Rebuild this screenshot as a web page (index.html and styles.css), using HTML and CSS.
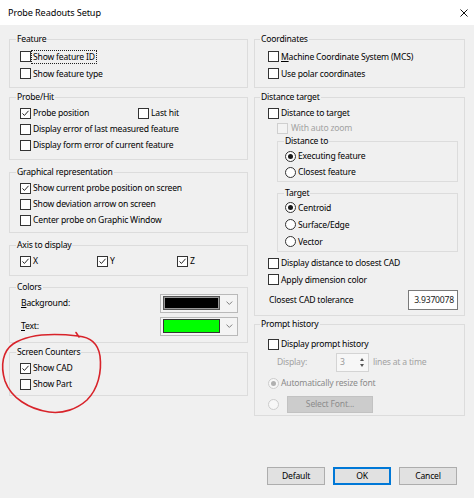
FILE: index.html
```html
<!DOCTYPE html>
<html>
<head>
<meta charset="utf-8">
<title>Probe Readouts Setup</title>
<link rel="stylesheet" href="styles.css">
</head>
<body>
<div class="window">
  <div class="titlebar">
    <span class="title">Probe Readouts Setup</span>
    <svg class="close" width="8" height="8" viewBox="0 0 8 8"><path d="M0.5 0.5L7.5 7.5M7.5 0.5L0.5 7.5" stroke="#111" stroke-width="1" fill="none"/></svg>
  </div>
  <div class="body">
    <div class="columns">
      <div class="col col-left">
        <fieldset class="grp g-feature">
          <legend>Feature</legend>
          <div class="row r17"><span class="cb"></span><span class="lbl focus">Show feature ID</span></div>
          <div class="row r17"><span class="cb"></span><span class="lbl">Show feature type</span></div>
        </fieldset>
        <fieldset class="grp g-probe">
          <legend>Probe/Hit</legend>
          <div class="row">
            <div class="item w118"><span class="cb"><svg viewBox="0 0 11 11"><path d="M1.8 5.4L4.2 7.9L9.2 2.2" class="tick"/></svg></span><span class="lbl">Probe position</span></div>
            <div class="item"><span class="cb"></span><span class="lbl">Last hit</span></div>
          </div>
          <div class="row"><span class="cb"></span><span class="lbl">Display error of last measured feature</span></div>
          <div class="row"><span class="cb"></span><span class="lbl">Display form error of current feature</span></div>
        </fieldset>
        <fieldset class="grp g-graph">
          <legend>Graphical representation</legend>
          <div class="row"><span class="cb"><svg viewBox="0 0 11 11"><path d="M1.8 5.4L4.2 7.9L9.2 2.2" class="tick"/></svg></span><span class="lbl">Show current probe position on screen</span></div>
          <div class="row"><span class="cb"></span><span class="lbl">Show deviation arrow on screen</span></div>
          <div class="row"><span class="cb"></span><span class="lbl">Center probe on Graphic Window</span></div>
        </fieldset>
        <fieldset class="grp g-axis">
          <legend>Axis to display</legend>
          <div class="row axis">
            <div class="item"><span class="cb"><svg viewBox="0 0 11 11"><path d="M1.8 5.4L4.2 7.9L9.2 2.2" class="tick"/></svg></span><span class="lbl">X</span></div>
            <div class="item"><span class="cb"><svg viewBox="0 0 11 11"><path d="M1.8 5.4L4.2 7.9L9.2 2.2" class="tick"/></svg></span><span class="lbl">Y</span></div>
            <div class="item"><span class="cb"><svg viewBox="0 0 11 11"><path d="M1.8 5.4L4.2 7.9L9.2 2.2" class="tick"/></svg></span><span class="lbl">Z</span></div>
          </div>
        </fieldset>
        <fieldset class="grp g-colors">
          <legend>Colors</legend>
          <div class="row crow">
            <span class="lbl grow"><u>B</u>ackground:</span>
            <div class="combo"><span class="swatch sw-black"></span><svg class="chev" width="7" height="4" viewBox="0 0 7 4"><path d="M0.5 0.5L3.5 3.5L6.5 0.5" stroke="#7a7a7a" fill="none"/></svg></div>
          </div>
          <div class="row crow crow2">
            <span class="lbl grow"><u>T</u>ext:</span>
            <div class="combo"><span class="swatch sw-green"></span><svg class="chev" width="7" height="4" viewBox="0 0 7 4"><path d="M0.5 0.5L3.5 3.5L6.5 0.5" stroke="#7a7a7a" fill="none"/></svg></div>
          </div>
        </fieldset>
        <fieldset class="grp g-screen">
          <legend>Screen Counters</legend>
          <div class="row"><span class="cb"><svg viewBox="0 0 11 11"><path d="M1.8 5.4L4.2 7.9L9.2 2.2" class="tick"/></svg></span><span class="lbl">Show CAD</span></div>
          <div class="row"><span class="cb"></span><span class="lbl">Show Part</span></div>
        </fieldset>
      </div>

      <div class="col col-right">
        <fieldset class="grp g-feature">
          <legend>Coordinates</legend>
          <div class="row r17"><span class="cb"></span><span class="lbl"><u>M</u>achine Coordinate System (MCS)</span></div>
          <div class="row r17"><span class="cb"></span><span class="lbl">Use polar coordinates</span></div>
        </fieldset>
        <fieldset class="grp g-dist">
          <legend>Distance target</legend>
          <div class="row"><span class="cb"></span><span class="lbl">Distance to target</span></div>
          <div class="row r14 indent"><span class="cb dis"></span><span class="lbl gray">With auto zoom</span></div>
          <fieldset class="grp sub g-distto">
            <legend>Distance to</legend>
            <div class="row"><span class="rb on"></span><span class="lbl">Executing feature</span></div>
            <div class="row"><span class="rb"></span><span class="lbl">Closest feature</span></div>
          </fieldset>
          <fieldset class="grp sub g-target">
            <legend>Target</legend>
            <div class="row r17"><span class="rb on"></span><span class="lbl">Centroid</span></div>
            <div class="row r17"><span class="rb"></span><span class="lbl">Surface/Edge</span></div>
            <div class="row r17"><span class="rb"></span><span class="lbl">Vector</span></div>
          </fieldset>
          <div class="row after-sub"><span class="cb"></span><span class="lbl">Display distance to closest CAD</span></div>
          <div class="row r17"><span class="cb"></span><span class="lbl">Apply dimension color</span></div>
          <div class="row tol-row">
            <span class="lbl grow">Closest CAD tolerance</span>
            <span class="tol">3.9370078</span>
          </div>
        </fieldset>
        <fieldset class="grp g-prompt">
          <legend>Prompt history</legend>
          <div class="row"><span class="cb"></span><span class="lbl">Display prompt history</span></div>
          <div class="row spin-row">
            <span class="lbl gray disp">Display:</span>
            <div class="spin"><span class="spin-val">3</span><span class="spin-btns"><span class="up"></span><span class="down"></span></span></div>
            <span class="lbl gray">lines at a time</span>
          </div>
          <div class="row auto-row"><span class="rb dis on"></span><span class="lbl gray2">Automatically resize font</span></div>
          <div class="row font-row"><span class="rb dis"></span><span class="fbtn">Select Font...</span></div>
        </fieldset>
      </div>
    </div>
    <div class="buttons">
      <span class="btn">Default</span>
      <span class="btn btn-ok">OK</span>
      <span class="btn">Cancel</span>
    </div>
  </div>
  <svg class="annot" width="474" height="498" viewBox="0 0 474 498">
    <path d="M76 332.5L79 337 M78 336 C90 337, 98 343, 100 356 C102 372, 98 389, 87 400 C77 409, 63 414, 49 412 C29 409, 11 398, 5 381 C0 365, 3 351, 13 344 C28 334, 52 333, 78 336" stroke="#d8232a" stroke-width="1.6" fill="none" stroke-linecap="round"/>
  </svg>
</div>
</body>
</html>
```

FILE: styles.css
```css
* { box-sizing: border-box; }
html, body { margin: 0; padding: 0; }
body {
  font-family: "Noto Sans", "Open Sans", sans-serif;
  font-size: 8.6px;
  letter-spacing: -0.2px;
  color: #000;
  background: #f0f0f0;
}
.window {
  width: 474px;
  height: 498px;
  position: relative;
  background: #f0f0f0;
  display: flex;
  flex-direction: column;
  overflow: hidden;
}
.titlebar {
  height: 25px;
  flex: none;
  background: #fff;
  display: flex;
  align-items: center;
  justify-content: space-between;
  padding: 0 6px 0 8px;
}
.title { font-size: 9.1px; letter-spacing: -0.1px; }
.close { display: block; }

.body {
  flex: 1;
  display: flex;
  flex-direction: column;
  padding: 8px 9px 13px 9px;
}
.columns { display: flex; gap: 6px; align-items: flex-start; }
.col { display: flex; flex-direction: column; }
.col-left { width: 239px; }
.col-right { width: 211px; }

.grp {
  margin: 0;
  min-width: 0;
  border: 1px solid #dcdcdc;
  padding: 2px 9px 5px 10px;
}
.grp legend {
  line-height: 12px;
  padding: 0 1px;
  margin-left: -4px;
}
.col-right > .grp { padding-left: 13px; padding-right: 6px; }
.col-right > .grp > legend { margin-left: -8px; }
.grp.sub { padding-left: 7px; padding-right: 0; }
.grp.sub > legend { margin-left: -1px; }

.g-feature { padding-top: 3px; padding-bottom: 5px; }
.g-probe { margin-top: 3px; padding-bottom: 6px; }
.g-graph { margin-top: 6px; padding-bottom: 4px; }
.g-axis { margin-top: 6px; padding-bottom: 6px; }
.g-colors { margin-top: 5px; padding-top: 0; padding-bottom: 6px; }
.g-screen { margin-top: 3px; padding-bottom: 3px; }

.g-dist { margin-top: 3px; padding-bottom: 5px; }
.g-distto { margin-left: 9px; padding-top: 1px; padding-bottom: 1px; }
.g-target { margin-left: 9px; margin-top: 5px; padding-top: 0; padding-bottom: 1px; }
.g-prompt { margin-top: 2px; padding-top: 6px; padding-bottom: 2px; }

.row {
  display: flex;
  align-items: center;
  height: 16px;
  white-space: nowrap;
}
.r17 { height: 17px; }
.r14 { height: 14px; }
.indent { padding-left: 9px; }
.item { display: flex; align-items: center; }
.w118 { width: 118px; }
.axis .item:nth-child(1) { width: 77px; }
.axis .item:nth-child(2) { width: 80px; }

.lbl { line-height: 12px; padding: 0 1px; }
.grow { flex: 1; }
.focus { outline: 1px dotted #222; outline-offset: 0; }
.gray { color: #a2a2a2; }
.gray2 { color: #8a8a8a; }

.cb {
  width: 11px;
  height: 11px;
  flex: none;
  border: 1px solid #333;
  background: #fff;
  margin-right: 1px;
  display: flex;
}
.cb svg { width: 9px; height: 9px; display: block; }
.tick { stroke: #222; stroke-width: 1.2; fill: none; }
.cb.dis { border-color: #cfcfcf; background: #f3f3f3; margin-right: 2px; }

.rb {
  width: 11px;
  height: 11px;
  flex: none;
  border: 1px solid #333;
  border-radius: 50%;
  background: #fff;
  margin-right: 1px;
  display: flex;
  align-items: center;
  justify-content: center;
}
.rb.on::after {
  content: "";
  width: 5px;
  height: 5px;
  border-radius: 50%;
  background: #1a1a1a;
}
.rb.dis { border-color: #cccccc; background: #f7f7f7; }
.rb.dis.on::after { background: #b0b0b0; }

.crow { height: 20px; }
.crow2 { margin-top: 3px; }
.combo {
  width: 78px;
  height: 19px;
  flex: none;
  border: 1px solid #b9b9b9;
  background: #f4f4f4;
  display: flex;
  align-items: center;
  padding: 2px 4px 2px 2px;
}
.swatch { width: 60px; height: 14px; border: 1px solid #333; }
.sw-black { background: #000; box-shadow: inset 0 0 0 1px #9a9a9a; border-color: #555; }
.sw-green { background: #00ff00; }
.chev { margin-left: 6px; display: block; }

.after-sub { margin-top: 3px; }
.tol-row { height: 21px; margin-top: 1px; }
.tol {
  width: 50px;
  height: 20px;
  flex: none;
  border: 1px solid #7a7a7a;
  background: #fff;
  text-align: right;
  padding: 0 3px;
  line-height: 18px;
  color: #222;
}

.spin-row { height: 20px; }
.disp { width: 59px; margin-left: 9px; padding: 0; }
.spin {
  width: 33px;
  height: 19px;
  flex: none;
  border: 1px solid #d4d4d4;
  background: #f7f7f7;
  display: flex;
  margin-right: 3px;
}
.spin-val { flex: 1; color: #9a9a9a; padding-left: 3px; line-height: 17px; }
.spin-btns {
  width: 12px;
  display: flex;
  flex-direction: column;
  justify-content: center;
  align-items: center;
  gap: 3px;
}
.spin-btns .up {
  width: 0; height: 0;
  border-left: 2.5px solid transparent;
  border-right: 2.5px solid transparent;
  border-bottom: 3px solid #555;
}
.spin-btns .down {
  width: 0; height: 0;
  border-left: 2.5px solid transparent;
  border-right: 2.5px solid transparent;
  border-top: 3px solid #555;
}
.auto-row { margin-top: 3px; }
.font-row { height: 17px; margin-top: 5px; }
.fbtn {
  margin-left: 7px;
  width: 86px;
  height: 17px;
  background: #cccccc;
  border: 1px solid #c2c2c2;
  color: #8c8c8c;
  text-align: center;
  line-height: 15px;
}

.buttons {
  margin-top: auto;
  display: flex;
  justify-content: flex-end;
  gap: 8px;
  padding-right: 8px;
}
.btn {
  width: 58px;
  height: 18px;
  background: #e1e1e1;
  border: 1px solid #adadad;
  text-align: center;
  line-height: 16px;
}
.btn-ok { border: 1px solid #0078d7; box-shadow: inset 0 0 0 1px #0078d7; }

.annot { position: absolute; left: 0; top: 0; pointer-events: none; }
```
